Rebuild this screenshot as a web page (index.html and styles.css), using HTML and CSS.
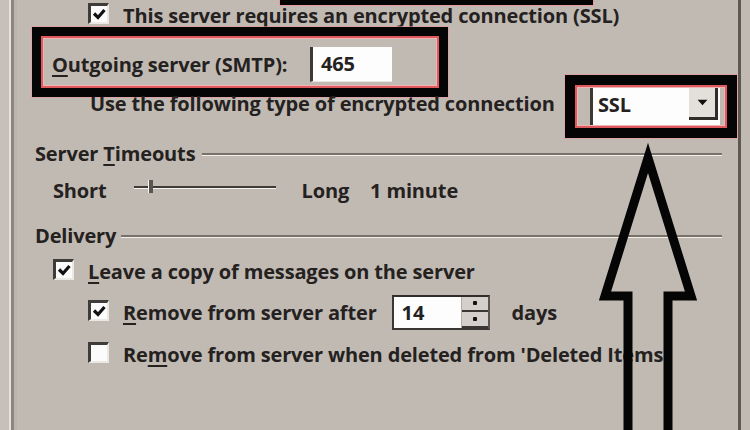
FILE: index.html
```html
<!DOCTYPE html>
<html>
<head>
<meta charset="utf-8">
<link rel="stylesheet" href="styles.css">
</head>
<body>
<div class="page">
  <div class="dialog">
    <div class="top-annot"></div>

    <div class="row r-ssl lvl2">
      <span class="cb checked"><svg viewBox="0 0 14 12"><path d="M2 5.5 L6 9.5 L12.5 2"/></svg></span>
      <span class="lbl">This server requires an encrypted connection (SSL)</span>
    </div>

    <div class="row r-smtp">
      <div class="annot smtp-annot">
        <span class="lbl"><u>O</u>utgoing server (SMTP):</span>
        <span class="textbox">465</span>
      </div>
    </div>

    <div class="row r-enc">
      <span class="lbl">Use the following type of encrypted connection</span>
      <div class="annot sel-annot">
        <div class="select">
          <span class="sel-val">SSL</span>
          <span class="sel-btn"><svg viewBox="0 0 10 6"><path d="M0.5 0.5 L9.5 0.5 L5 5.5 Z"/></svg></span>
        </div>
      </div>
    </div>

    <div class="grp-head h-timeouts"><span class="lbl">Server <u>T</u>imeouts</span></div>

    <div class="row r-slider lvl1">
      <span class="lbl">Short</span>
      <div class="slider"><span class="thumb"></span></div>
      <span class="lbl long">Long</span>
      <span class="lbl minute">1 minute</span>
    </div>

    <div class="grp-head h-delivery"><span class="lbl">Delivery</span></div>

    <div class="row r-leave lvl1">
      <span class="cb checked"><svg viewBox="0 0 14 12"><path d="M2 5.5 L6 9.5 L12.5 2"/></svg></span>
      <span class="lbl"><u>L</u>eave a copy of messages on the server</span>
    </div>

    <div class="row r-after lvl2">
      <span class="cb checked"><svg viewBox="0 0 14 12"><path d="M2 5.5 L6 9.5 L12.5 2"/></svg></span>
      <span class="lbl"><u>R</u>emove from server after</span>
      <div class="spin">
        <span class="spin-val">14</span>
        <span class="spin-btns"><span class="sb"><i></i></span><span class="sb"><i></i></span></span>
      </div>
      <span class="lbl days">days</span>
    </div>

    <div class="row r-deleted lvl2">
      <span class="cb"></span>
      <span class="lbl">Re<u>m</u>ove from server when deleted from 'Deleted Items'</span>
    </div>

    <svg class="arrow" viewBox="0 0 750 430" width="750" height="430">
      <polyline points="628,440 628,296 605,296 648,158 691,296 668,296 668,440"/>
    </svg>
  </div>
</div>
</body>
</html>
```

FILE: styles.css
```css
html, body {
  margin: 0;
  padding: 0;
}

body {
  width: 750px;
  height: 430px;
  overflow: hidden;
  background: #c1bab3;
  font-family: "Open Sans", "Liberation Sans", sans-serif;
  font-weight: 700;
  font-size: 20px;
  letter-spacing: -0.15px;
  color: #24211f;
}

.page {
  display: flex;
  height: 430px;
  padding-left: 17px;
  padding-right: 9px;
  background:
    linear-gradient(to right, #c7c0b9 0 9px, #e6e1dc 9px 11px, #8c857e 11px 14px, #bcb5ae 14px 17px, transparent 17px);
}

.dialog {
  position: relative;
  flex: 1;
  display: flex;
  flex-direction: column;
  padding: 0 16px 0 18px;
  border-right: 3px solid #5d5852;
}

u {
  text-decoration-thickness: 2px;
  text-underline-offset: 3px;
}

.lbl {
  white-space: nowrap;
}

.row {
  display: flex;
  align-items: center;
}

.lvl1 { padding-left: 18px; }
.lvl2 { padding-left: 53px; }

/* checkbox */
.cb {
  width: 21px;
  height: 21px;
  box-sizing: border-box;
  background: #fbfbfb;
  border: 3px solid;
  border-color: #3f3b38 #ebe7e3 #ebe7e3 #3f3b38;
  border-right-width: 2px;
  border-bottom-width: 2px;
  margin-right: 14px;
  margin-bottom: 3px;
  flex: none;
  display: flex;
  align-items: center;
  justify-content: center;
}

.cb svg {
  width: 14px;
  height: 12px;
}

.cb svg path {
  fill: none;
  stroke: #111;
  stroke-width: 3.2;
}

/* rows */
.r-ssl {
  height: 30px;
}

.r-smtp {
  margin-top: -3px;
  margin-left: -3px;
}

.annot {
  border: 9px solid #050505;
  box-shadow: inset 0 0 0 2px #df5a5f, inset 0 0 0 3px #f1b3b3, 0 0 0 1px rgba(235, 150, 150, 0.6);
}

.smtp-annot {
  width: 416px;
  height: 70px;
  box-sizing: border-box;
  display: flex;
  align-items: center;
  padding: 4px 0 0 11px;
}

.smtp-annot .lbl {
  width: 258px;
}

.textbox {
  width: 82px;
  height: 35px;
  box-sizing: border-box;
  background: #fdfdfd;
  border-left: 3px solid #3c3935;
  border-bottom: 1px solid #e8e4e0;
  padding-left: 8px;
  display: flex;
  align-items: center;
}

.r-enc {
  height: 30px;
  margin-top: -9px;
  padding-left: 55px;
}

.sel-annot {
  margin-left: auto;
  margin-right: -15px;
  margin-top: 7px;
  border-width: 10px;
  padding: 3px 7px 3px 15px;
  flex: none;
}

.select {
  width: 130px;
  height: 37px;
  box-sizing: border-box;
  background: #fdfdfd;
  border-left: 3px solid #3c3935;
  display: flex;
  align-items: flex-start;
  padding: 0 2px 0 5px;
}

.sel-val {
  flex: 1;
  line-height: 34px;
}

.sel-btn {
  width: 29px;
  height: 32px;
  box-sizing: border-box;
  background: #e3dfdb;
  border-right: 3px solid #2f2c29;
  border-bottom: 3px solid #2f2c29;
  display: flex;
  align-items: center;
  justify-content: center;
}

.sel-btn svg {
  width: 11px;
  height: 7px;
}

.sel-btn svg path {
  fill: #111;
}

/* group headers */
.grp-head {
  height: 24px;
  display: flex;
  align-items: center;
  gap: 7px;
}

.grp-head::after {
  content: "";
  flex: 1;
  height: 2px;
  background: #77716b;
  border-bottom: 1px solid #f3efeb;
  margin-top: 2px;
}

.h-timeouts {
  margin-top: 23px;
}

.h-delivery {
  margin-top: 21px;
  gap: 5px;
}

/* slider */
.r-slider {
  height: 24px;
  margin-top: 13px;
}

.slider {
  position: relative;
  width: 142px;
  height: 2px;
  margin: 0 26px 0 27px;
  background: #3f3b37;
  border-bottom: 1px solid #f4f1ee;
  top: -3px;
}

.thumb {
  position: absolute;
  left: 14px;
  top: -6px;
  width: 4px;
  height: 13px;
  background: #5a5550;
  border-left: 1px solid #f6f3f0;
}

.minute {
  margin-left: 21px;
}

/* delivery rows */
.r-leave {
  height: 24px;
  margin-top: 12px;
}

.r-after {
  height: 24px;
  margin-top: 17px;
}

.spin {
  width: 98px;
  height: 35px;
  box-sizing: border-box;
  margin-left: 15px;
  background: #fdfdfd;
  border: 2px solid;
  border-color: #2f2c29 #5a5550 #3a3633 #3a3633;
  display: flex;
  align-items: center;
  flex: none;
}

.spin-val {
  flex: 1;
  padding-left: 8px;
}

.spin-btns {
  width: 26px;
  height: 100%;
  display: flex;
  flex-direction: column;
  border-left: 1px solid #b3ada7;
}

.sb {
  flex: 1;
  background: #d4cfca;
  border-bottom: 2px solid #3a3633;
  display: flex;
  align-items: center;
  justify-content: center;
}

.sb i {
  width: 4px;
  height: 4px;
  background: #111;
  border-radius: 1px;
}

.days {
  margin-left: 22px;
}

.r-deleted {
  height: 24px;
  margin-top: 18px;
}

/* annotation overlays */
.top-annot {
  position: absolute;
  left: 263px;
  top: -4px;
  width: 313px;
  height: 9px;
  background: #050505;
  box-shadow: 0 0 0 1px #e99a9a;
}

.arrow {
  position: absolute;
  left: -17px;
  top: 0;
  pointer-events: none;
}

.arrow polyline {
  fill: none;
  stroke: #050505;
  stroke-width: 9;
  stroke-linejoin: miter;
  stroke-miterlimit: 6;
}
```
